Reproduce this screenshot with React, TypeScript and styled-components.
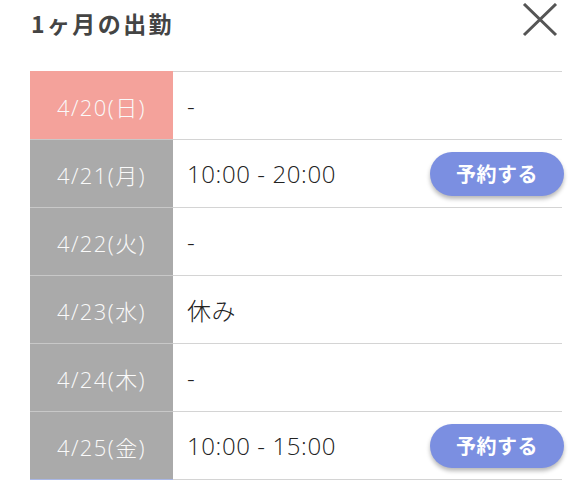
import { createGlobalStyle } from "styled-components";
import styled from "styled-components";

interface ShiftDay {
  date: string;
  kind: "sun" | "sat" | "week";
  time: string;
  bookable: boolean;
}

const days: ShiftDay[] = [
  { date: "4/20(日)", kind: "sun", time: "-", bookable: false },
  { date: "4/21(月)", kind: "week", time: "10:00 - 20:00", bookable: true },
  { date: "4/22(火)", kind: "week", time: "-", bookable: false },
  { date: "4/23(水)", kind: "week", time: "休み", bookable: false },
  { date: "4/24(木)", kind: "week", time: "-", bookable: false },
  { date: "4/25(金)", kind: "week", time: "10:00 - 15:00", bookable: true },
  { date: "4/26(土)", kind: "sat", time: "-", bookable: false },
];

const cellColor = {
  sun: "#f4a29b",
  sat: "#a9b7e6",
  week: "#aaaaaa",
};

const FONT = `"Open Sans", "Noto Sans CJK JP", "Noto Sans", sans-serif`;

const GlobalStyle = createGlobalStyle`
  html, body {
    margin: 0;
    padding: 0;
    background: #ffffff;
    overflow: hidden;
  }
  body {
    font-family: ${FONT};
  }
`;

const Page = styled.div`
  width: 576px;
  height: 480px;
  overflow: hidden;
  padding: 0 14px 0 30px;
  box-sizing: border-box;
`;

const Header = styled.div`
  height: 71px;
  display: flex;
  justify-content: space-between;
  align-items: flex-start;
`;

const Title = styled.h1`
  margin: 8px 0 0 1px;
  font-family: "Noto Sans CJK JP", sans-serif;
  font-size: 23px;
  line-height: 30px;
  font-weight: 700;
  color: #444444;
  letter-spacing: 2.4px;
`;

const CloseButton = styled.button`
  width: 40px;
  height: 40px;
  margin: 0 2px 0 0;
  padding: 0;
  border: none;
  background: transparent;
  display: flex;
  align-items: center;
  justify-content: center;
`;

const Table = styled.div`
  display: flex;
  flex-direction: column;
`;

const Row = styled.div`
  display: flex;
  height: 68px;
  flex-shrink: 0;
  border-top: 1px solid #d4d4d4;
  box-sizing: border-box;
`;

const DateCell = styled.div<{ $kind: ShiftDay["kind"] }>`
  width: 143px;
  flex-shrink: 0;
  margin-top: -1px;
  border-top: 1px solid ${({ $kind }) => ($kind === "week" ? "#c8c8c8" : cellColor[$kind])};
  background: ${({ $kind }) => cellColor[$kind]};
  color: #fafafa;
  font-size: 22px;
  font-weight: 300;
  letter-spacing: 1.4px;
  display: flex;
  align-items: center;
  justify-content: center;
`;

const TimeCell = styled.div`
  flex: 1;
  display: flex;
  align-items: center;
  justify-content: space-between;
  padding-left: 14px;
  font-size: 24px;
  font-weight: 300;
  letter-spacing: 0.6px;
  color: #222222;
`;

const BookButton = styled.button`
  width: 134px;
  height: 44px;
  margin-right: -2px;
  border: none;
  border-radius: 22px;
  background: #7b8fe1;
  color: #ffffff;
  font-family: "Noto Sans CJK JP", sans-serif;
  font-size: 20px;
  letter-spacing: 0.5px;
  font-weight: 700;
  box-shadow: 0 3px 4px rgba(0, 0, 0, 0.28);
`;

const CloseIcon = () => (
  <svg width="36" height="34" viewBox="0 0 36 34">
    <path d="M2 1 L34 32 M34 1 L2 32" stroke="#555555" strokeWidth="3" fill="none" />
  </svg>
);

const App = () => {
  return (
    <Page>
      <GlobalStyle />
      <Header>
        <Title>1ヶ月の出勤</Title>
        <CloseButton aria-label="閉じる">
          <CloseIcon />
        </CloseButton>
      </Header>
      <Table>
        {days.map((day) => (
          <Row key={day.date}>
            <DateCell $kind={day.kind}>{day.date}</DateCell>
            <TimeCell>
              <span>{day.time}</span>
              {day.bookable && <BookButton>予約する</BookButton>}
            </TimeCell>
          </Row>
        ))}
      </Table>
    </Page>
  );
};

export default App;
